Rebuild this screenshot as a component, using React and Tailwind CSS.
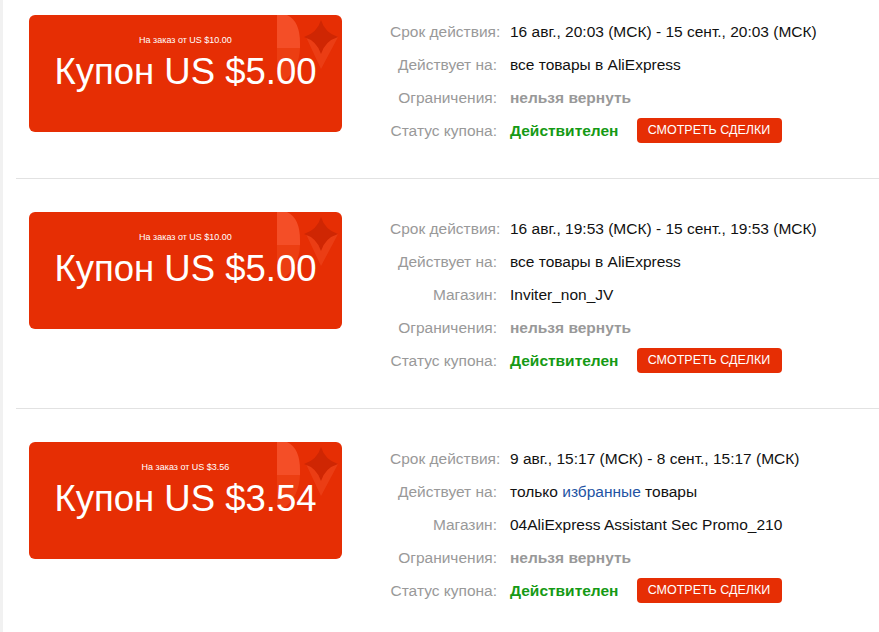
import React from "react";

const coupons = [
  {
    minOrder: "US $10.00",
    amount: "US $5.00",
    period: "16 авг., 20:03 (МСК) - 15 сент., 20:03 (МСК)",
    scope: "all",
    shop: null,
  },
  {
    minOrder: "US $10.00",
    amount: "US $5.00",
    period: "16 авг., 19:53 (МСК) - 15 сент., 19:53 (МСК)",
    scope: "all",
    shop: "Inviter_non_JV",
  },
  {
    minOrder: "US $3.56",
    amount: "US $3.54",
    period: "9 авг., 15:17 (МСК) - 8 сент., 15:17 (МСК)",
    scope: "selected",
    shop: "04AliExpress Assistant Sec Promo_210",
  },
];

// corner pattern on the coupon: leaf + four-point star
const CouponDecor = () => (
  <svg
    className="absolute right-0 top-0"
    width="66"
    height="70"
    viewBox="0 0 66 70"
  >
    <path d="M1 0 H11 Q24 6 24 28 V33 H1 Z" fill="#ff6a45" opacity="0.55" />
    <path d="M1 33 H24 Q23 55 8 66 H1 Z" fill="#f04a1c" opacity="0.6" />
    <path d="M30 22 H62 L45 54 Z" fill="#ee4a22" opacity="0.55" />
    <path
      d="M45 5 Q49 18 62 22 Q49 26 45 39 Q41 26 28 22 Q41 18 45 5 Z"
      fill="#cf2603"
    />
  </svg>
);

const Coupon = ({ minOrder, amount }) => (
  <div className="relative w-[313px] h-[117px] shrink-0 rounded-[6px] bg-[#e62e04] overflow-hidden text-white text-center pt-[20px]">
    <CouponDecor />
    <div className="relative text-[9px] leading-[11px]">
      На заказ от {minOrder}
    </div>
    <div className="relative mt-[5px] text-[36.5px] leading-[41px]">
      Купон {amount}
    </div>
  </div>
);

const Row = ({ label, children }) => (
  <div className="flex items-center h-[33px]">
    <div className="w-[120px] text-right text-[#999] pr-[13px] whitespace-nowrap">
      {label}
    </div>
    <div className="flex items-center whitespace-nowrap text-[#111]">
      {children}
    </div>
  </div>
);

const CouponItem = ({ coupon, first, last }) => (
  <div
    className={
      "flex pl-[13px] pb-[31px] " +
      (first ? "pt-[15px] " : "pt-[33px] ") +
      (last ? "" : "border-b border-[#e2e2e2]")
    }
  >
    <Coupon minOrder={coupon.minOrder} amount={coupon.amount} />
    <div className="ml-[48px] text-[15.5px]">
      <Row label="Срок действия:">{coupon.period}</Row>
      <Row label="Действует на:">
        {coupon.scope === "all" ? (
          "все товары в AliExpress"
        ) : (
          <span>
            только <span className="text-[#2353a3]">избранные</span> товары
          </span>
        )}
      </Row>
      {coupon.shop && <Row label="Магазин:">{coupon.shop}</Row>}
      <Row label="Ограничения:">
        <span className="font-bold text-[#999]">нельзя вернуть</span>
      </Row>
      <Row label="Статус купона:">
        <span className="font-bold text-[#159a15]">Действителен</span>
        <button
          type="button"
          className="ml-[18px] w-[145px] h-[25px] rounded-[4px] bg-[#e62e04] text-white text-[12.5px] uppercase"
        >
          Смотреть сделки
        </button>
      </Row>
    </div>
  </div>
);

export default function App() {
  return (
    <div
      className="flex min-h-[632px] bg-white"
      style={{ fontFamily: '"Liberation Sans", Arial, sans-serif' }}
    >
      <div className="w-[3px] shrink-0 bg-[#f1f1f1]" />
      <div className="flex-1 pl-[13px]">
        {coupons.map((c, i) => (
          <CouponItem
            key={i}
            coupon={c}
            first={i === 0}
            last={i === coupons.length - 1}
          />
        ))}
      </div>
    </div>
  );
}
